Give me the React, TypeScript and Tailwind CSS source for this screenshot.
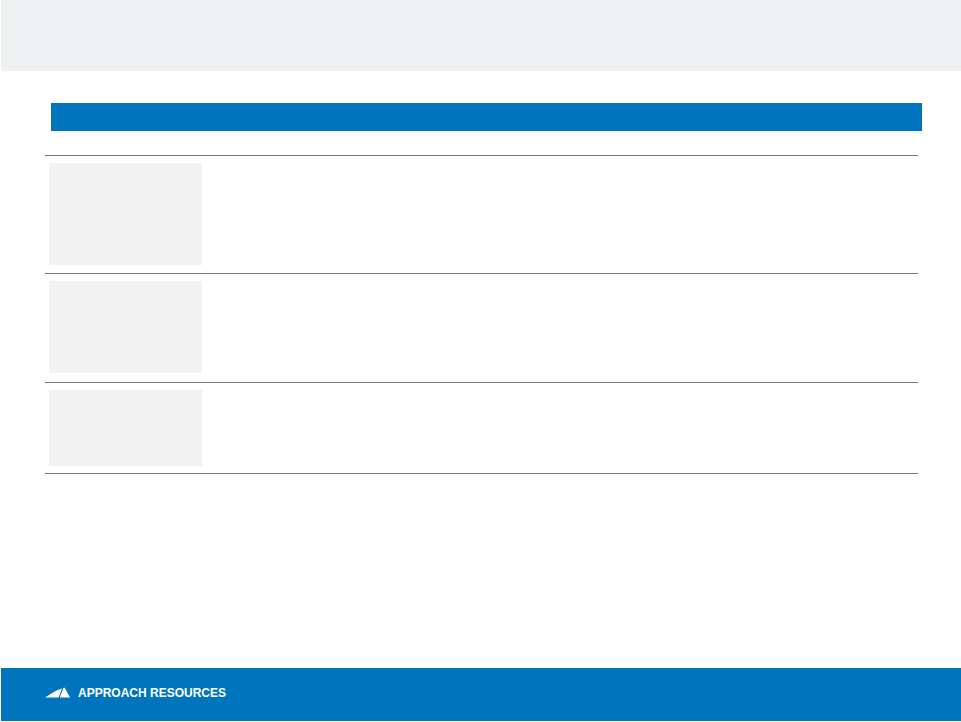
const rows = [
  { id: 'first', box: 'h-[102px]', gap: 'pb-[8px]' },
  { id: 'second', box: 'h-[92px]', gap: 'pb-[9px]' },
  { id: 'third', box: 'h-[76px]', gap: 'pb-[7px]' },
]

export default function App() {
  return (
    <div className="flex flex-col w-[961px] h-[722px] bg-white overflow-hidden font-['Liberation_Sans',sans-serif]">
      {/* Top band */}
      <div className="h-[71px] ml-px bg-[#eff0f2] shrink-0" />

      {/* Title bar */}
      <div className="h-[28px] mt-[32px] ml-[51px] w-[871px] bg-[#0075be] shrink-0" />

      {/* Rows */}
      <div className="mt-[24px] ml-[45px] w-[873px] border-t border-[#787878] shrink-0">
        {rows.map((row) => (
          <div key={row.id} className={`pt-[7px] pl-[4px] ${row.gap} border-b border-[#787878]`}>
            <div className={`w-[153px] bg-[#f2f2f2] ${row.box}`} />
          </div>
        ))}
      </div>

      <div className="flex-1" />

      {/* Footer */}
      <div className="h-[53px] ml-px mb-px bg-[#0075be] flex items-center pl-[44px] pb-[4px] shrink-0">
        <svg width="25" height="11" viewBox="0 0 25 11" className="mr-[8px]">
          <path d="M0 10.5 L8 5.5 Q12 3 17 1.6 L13.6 10.5 Z" fill="#ffffff" />
          <path d="M14.8 10.5 L18.4 0.8 L19.8 0.8 L25 10.5 Z" fill="#ffffff" />
        </svg>
        <span className="text-[12px] font-bold text-white whitespace-nowrap">APPROACH RESOURCES</span>
      </div>
    </div>
  )
}
